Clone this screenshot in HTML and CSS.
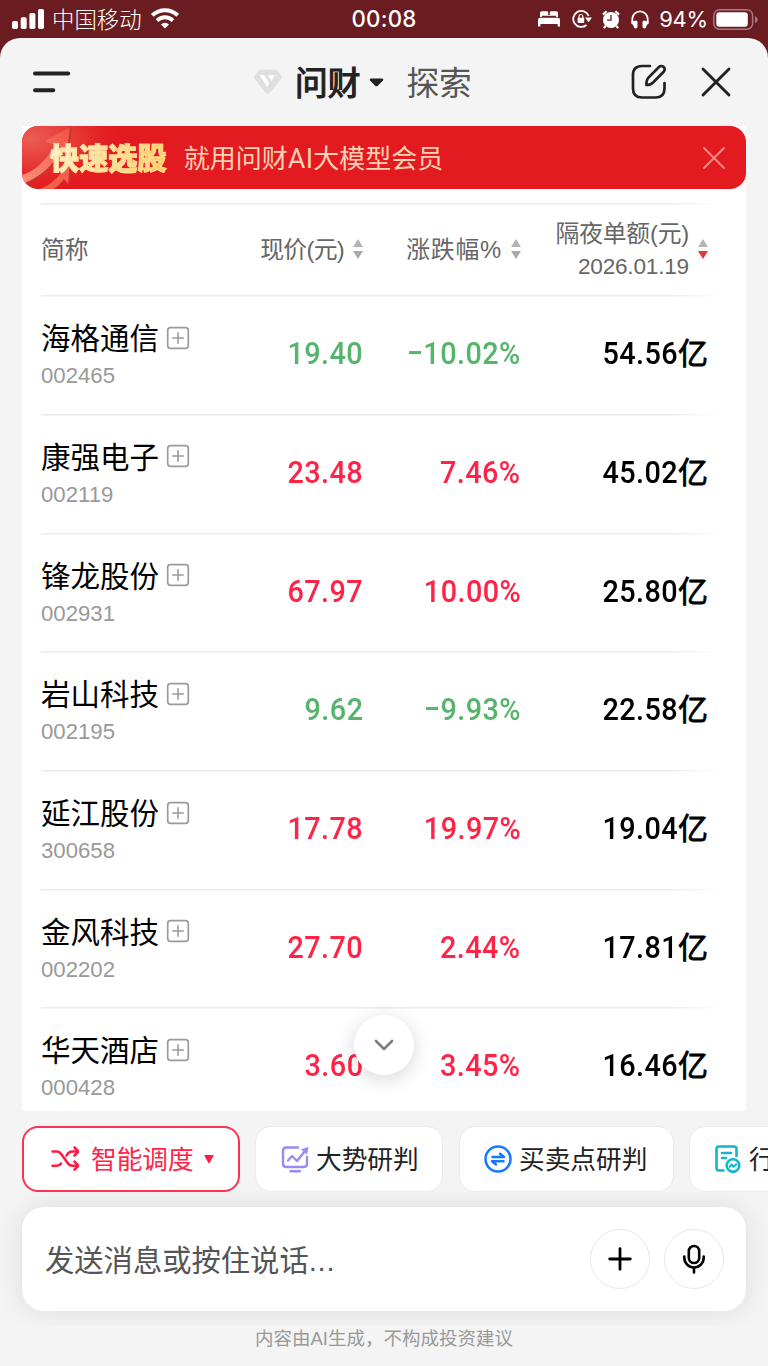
FILE: index.html
```html
<!DOCTYPE html>
<html lang="zh-CN">
<head>
<meta charset="utf-8">
<title>问财</title>
<link rel="stylesheet" href="styles.css">
</head>
<body>
<svg width="0" height="0" class="defs" aria-hidden="true">
  <symbol id="add" viewBox="0 0 24 24"><rect x="1.7" y="1.7" width="20.6" height="20.6" rx="2.8" fill="none" stroke="#9b9b9b" stroke-width="1.7"/><path d="M12 6.2v11.6M6.2 12h11.6" stroke="#9b9b9b" stroke-width="1.6"/></symbol>
  <symbol id="sort" viewBox="0 0 10 20"><path d="M5 0L10 8H0z" fill="#b3b3b3"/><path d="M0 12h10L5 20z" fill="currentColor"/></symbol>
</svg>
<div class="status">
  <div class="status-left">
    <svg width="32" height="20" viewBox="0 0 32 20" fill="#fff"><rect x="0" y="12" width="6" height="8" rx="1.7"/><rect x="8.7" y="8.3" width="6" height="11.7" rx="1.7"/><rect x="17.4" y="4" width="6" height="16" rx="1.7"/><rect x="26" y="0" width="6" height="20" rx="1.7"/></svg>
    <span class="carrier">中国移动</span>
    <svg class="wifi" width="28" height="21" viewBox="0 0 28 21" fill="none" stroke="#fff" stroke-width="3.9"><path d="M1.3 7.3a18.3 18.3 0 0 1 25.4 0"/><path d="M6 12.6a11.4 11.4 0 0 1 16 0"/><path d="M14 20.6l-4-4.2a5.8 5.8 0 0 1 8 0z" fill="#fff" stroke="none"/></svg>
  </div>
  <span class="time">00:08</span>
  <div class="status-right">
    <svg width="22" height="16" viewBox="0 0 22 16" fill="#fff"><path d="M2 6V2Q2 .3 3.7.3H9q1.2 0 1.2 1.2V4H11.800V1.500Q11.800.3 13 .3h5.300Q20 .3 20 2v4h-2V4.800H4V6z"/><path d="M2 6.800h18q2 0 2 2V15.500h-2.400V13H2.400v2.500H0V8.800q0-2 2-2z"/></svg>
    <svg class="lock" width="20" height="18" viewBox="0 0 20 18"><path d="M16.700 6A8 8 0 1 0 14.500 15" fill="none" stroke="#fff" stroke-width="1.800"/><path d="M13 7.500h7l-3.500 4.700z" fill="#fff"/><rect x="5.600" y="7.700" width="6.600" height="5.300" rx=".8" fill="#fff"/><path d="M7 8V6.400a1.900 1.900 0 0 1 3.800 0V8" fill="none" stroke="#fff" stroke-width="1.200"/></svg>
    <svg class="alarm" width="18" height="19" viewBox="0 0 18 19"><circle cx="9" cy="10" r="8" fill="#fff"/><path d="M.9 4.600L4.600 1.300M13.400 1.300l3.700 3.300M3.500 16l-1.600 2.200M14.500 16l1.600 2.200" stroke="#fff" stroke-width="2.200"/><path d="M9 5v5.200H5" fill="none" stroke="#6a1c20" stroke-width="1.300"/></svg>
    <svg class="phones" width="18" height="19" viewBox="0 0 18 19"><path d="M1.300 14V9a7.700 7.700 0 0 1 15.400 0v5" fill="none" stroke="#fff" stroke-width="1.800"/><rect x="2.800" y="10.500" width="3.700" height="8" rx="1.700" fill="#fff"/><rect x="11.500" y="10.500" width="3.700" height="8" rx="1.700" fill="#fff"/><path d="M.4 11h2.700v5.500Q.4 14 .4 11zM17.600 11h-2.700v5.500q2.700-2.500 2.700-5.500z" fill="#fff"/></svg>
    <span class="pct">94%</span>
    <svg class="battery" width="45" height="21" viewBox="0 0 45 21"><rect x=".8" y=".8" width="38.800" height="19.400" rx="5.600" fill="none" stroke="#a87a7c" stroke-width="1.500"/><rect x="3.300" y="3.300" width="31.500" height="14.400" rx="3" fill="#fff"/><path d="M42 7q2.700 1 2.700 3.500T42 14z" fill="#a87a7c"/></svg>
  </div>
</div>
<main class="sheet">
  <header class="top">
    <svg class="menu" width="38" height="24" viewBox="0 0 38 24" stroke="#222" stroke-width="4" stroke-linecap="round"><path d="M2 3.500h33.200M2 20.200h18.300"/></svg>
    <svg class="gem" width="30" height="26" viewBox="0 0 30 26"><path d="M7.500.8h15q1.500 0 2.400 1.200l3.500 4.700q1 1.500 0 3L17.600 23q-3 3.500-5.600 0L1.500 9.700q-1-1.500 0-3L5.100 2Q6 .8 7.500.8z" fill="#dfdfdf"/><path d="M6.500 6h4.500l5.300 8-2.200 4zM14.500 6h7.300l-3.200 6z" fill="#fff"/></svg>
    <span class="tab-on">问财</span>
    <svg class="caret" width="15" height="9" viewBox="0 0 15 9"><path d="M1.800.5h11.400q1.800.5.800 2L8.800 7.700q-1.300 1.200-2.600 0L1 2.500Q0 1 1.800.5z" fill="#222"/></svg>
    <span class="tab-off">探索</span>
    <svg class="edit" width="36" height="36" viewBox="0 0 36 36" fill="none" stroke="#222" stroke-width="2.700" stroke-linecap="round" stroke-linejoin="round"><path d="M19 2H11Q2 2 2 11v13.500q0 9 9 9h13.500q9 0 9-9V19"/><path d="M15.500 21q-.5-5 2.400-7.900L28 3a3.300 3.300 0 0 1 4.700 4.700L22.800 17.800q-2.800 3.200-7.300 3.200z"/></svg>
    <svg class="close" width="32" height="32" viewBox="0 0 32 32" stroke="#222" stroke-width="2.900" stroke-linecap="round"><path d="M3 3l26 26M29 3L3 29"/></svg>
  </header>
  <section class="panel">
    <div class="banner">
      <svg class="banner-art" width="110" height="63" viewBox="0 0 110 63">
        <defs><radialGradient id="glow" cx="8%" cy="20%" r="85%"><stop offset="0" stop-color="#ec5d55"/><stop offset=".5" stop-color="#e83f3b" stop-opacity=".8"/><stop offset="1" stop-color="#e31b20" stop-opacity="0"/></radialGradient><linearGradient id="arrow" x1="0" y1="1" x2="1" y2="0"><stop offset="0" stop-color="#ff9078"/><stop offset="1" stop-color="#ee5244"/></linearGradient></defs>
        <rect width="110" height="63" fill="url(#glow)"/>
        <path d="M3 59Q29 48 41 25l6-1 3-22-2-1z" fill="#c4352f"/>
        <path d="M0 49Q18 44 33 19l-10-4L48 1l-3 26-5-4Q27 48 0 58z" fill="url(#arrow)"/>
        <path d="M46 38l5-3-4 24-3-6z" fill="#c4352f"/><path d="M18 63q13-5 21-16l-5-2 14-11-2 24-4-5q-5 7-11 10z" fill="#f5604d"/>
      </svg>
      <strong class="banner-title">快速选股</strong>
      <span class="banner-text">就用问财<span class="latin">AI</span>大模型会员</span>
      <svg class="banner-close" width="24" height="24" viewBox="0 0 24 24" stroke="#f58b86" stroke-width="1.900" stroke-linecap="round"><path d="M2 2l20 20M22 2L2 22"/></svg>
    </div>
    <div class="table">
      <div class="row head">
        <span class="h-name">简称</span>
        <span class="h-cell h-price"><span>现价(元)</span><svg class="sort"><use href="#sort"/></svg></span>
        <span class="h-cell h-rate"><span>涨跌幅%</span><svg class="sort"><use href="#sort"/></svg></span>
        <span class="h-cell h-amt"><span class="two">隔夜单额(元)<br><span class="date">2026.01.19</span></span><svg class="sort active"><use href="#sort"/></svg></span>
      </div>
      <div class="row"><div class="stock"><div class="name">海格通信<svg class="add"><use href="#add"/></svg></div><div class="code">002465</div></div><span class="num down"><b>19.40</b></span><span class="num down"><b>−10.02%</b></span><span class="num"><b>54.56</b><i>亿</i></span></div>
      <div class="row"><div class="stock"><div class="name">康强电子<svg class="add"><use href="#add"/></svg></div><div class="code">002119</div></div><span class="num up"><b>23.48</b></span><span class="num up"><b>7.46%</b></span><span class="num"><b>45.02</b><i>亿</i></span></div>
      <div class="row"><div class="stock"><div class="name">锋龙股份<svg class="add"><use href="#add"/></svg></div><div class="code">002931</div></div><span class="num up"><b>67.97</b></span><span class="num up"><b>10.00%</b></span><span class="num"><b>25.80</b><i>亿</i></span></div>
      <div class="row"><div class="stock"><div class="name">岩山科技<svg class="add"><use href="#add"/></svg></div><div class="code">002195</div></div><span class="num down"><b>9.62</b></span><span class="num down"><b>−9.93%</b></span><span class="num"><b>22.58</b><i>亿</i></span></div>
      <div class="row"><div class="stock"><div class="name">延江股份<svg class="add"><use href="#add"/></svg></div><div class="code">300658</div></div><span class="num up"><b>17.78</b></span><span class="num up"><b>19.97%</b></span><span class="num"><b>19.04</b><i>亿</i></span></div>
      <div class="row"><div class="stock"><div class="name">金风科技<svg class="add"><use href="#add"/></svg></div><div class="code">002202</div></div><span class="num up"><b>27.70</b></span><span class="num up"><b>2.44%</b></span><span class="num"><b>17.81</b><i>亿</i></span></div>
      <div class="row"><div class="stock"><div class="name">华天酒店<svg class="add"><use href="#add"/></svg></div><div class="code">000428</div></div><span class="num up"><b>3.60</b></span><span class="num up"><b>3.45%</b></span><span class="num"><b>16.46</b><i>亿</i></span></div>
    </div>
    <div class="scroll-down"><svg width="20" height="12" viewBox="0 0 20 12" fill="none" stroke="#7d7f86" stroke-width="2.700" stroke-linecap="round" stroke-linejoin="round"><path d="M2 2l8 8 8-8"/></svg></div>
  </section>
  <nav class="chips">
    <div class="chip chip-on">
      <svg width="28" height="26" viewBox="0 0 28 26" fill="none" stroke="#ff1a44" stroke-width="2.500" stroke-linecap="round" stroke-linejoin="round"><path d="M1.500 5.500h4.500q2.500 0 4 2.200l6.500 9q2 3 5 3H27M1.500 19.700h4.500q2.500 0 4-2.200M15.500 9.500q2.300-4 5.500-4H27M23.500 1.500l4 4-4 4M23.500 15.700l4 4-4 4"/></svg>
      <span>智能调度</span>
      <svg class="chip-caret" width="10" height="9" viewBox="0 0 10 9"><path d="M.8.500h8.400L5 8z" fill="#ff1a44" stroke="#ff1a44" stroke-linejoin="round"/></svg>
    </div>
    <div class="chip chip-trend">
      <svg width="28" height="28" viewBox="0 0 28 28" fill="none" stroke="#968cf5" stroke-width="2.400" stroke-linecap="round" stroke-linejoin="round"><path d="M17 2.500H5.500Q2 2.500 2 6v12.500Q2 22 5.500 22h17q3.500 0 3.500-3.500V12M9.500 26.300h9.500M7 15.500l4-4.500 5 5L24 6"/><path d="M21 4.500l6-2-1.300 6z" fill="#968cf5" stroke-width="1"/></svg>
      <span>大势研判</span>
    </div>
    <div class="chip chip-trade">
      <svg width="28" height="28" viewBox="0 0 28 28" fill="none" stroke="#1677ff" stroke-width="2.500" stroke-linecap="round" stroke-linejoin="round"><circle cx="14" cy="14" r="12.500"/><path d="M8.500 12h11.500l-4-3.200M19.500 16.200H8l4 3.200"/></svg>
      <span>买卖点研判</span>
    </div>
    <div class="chip chip-cut">
      <svg width="26" height="28" viewBox="0 0 26 28" fill="none" stroke="#11b7c9" stroke-width="2.600" stroke-linecap="round" stroke-linejoin="round"><path d="M8.500 25.500H4q-2.500 0-2.500-2.500V4Q1.500 1.500 4 1.500h15q2.500 0 2.500 2.500v7M7 8h9M7 13h4"/><circle cx="18" cy="20.500" r="6.300"/><path d="M14.700 21.800l2.200-2.300 1.700 2.300 2.600-2.600" stroke-width="2"/></svg>
      <span>行</span>
    </div>
  </nav>
  <div class="dock">
    <div class="input">
      <span class="placeholder">发送消息或按住说话<span class="dots">...</span></span>
      <span class="round"><svg width="24" height="24" viewBox="0 0 24 24" stroke="#000" stroke-width="2.800" stroke-linecap="round"><path d="M12 1.700v20.600M1.700 12h20.600"/></svg></span>
      <span class="round"><svg width="24" height="30" viewBox="0 0 24 30" fill="none" stroke="#000" stroke-width="2.600" stroke-linecap="round"><rect x="6.800" y="2" width="10.400" height="17" rx="5.200"/><path d="M2.300 12.500v1.300a9.700 9.700 0 0 0 19.400 0v-1.300M12 23.800v4.700"/></svg></span>
    </div>
  </div>
  <footer class="note">内容由AI生成，不构成投资建议</footer>
</main>
</body>
</html>
```
FILE: styles.css
```css
* { box-sizing: border-box; }
body {
  margin: 0;
  width: 768px;
  height: 1366px;
  overflow: hidden;
  background: #6a1c20;
  font-family: "Liberation Sans", "Noto Sans CJK SC", sans-serif;
  color: #000;
  display: flex;
  flex-direction: column;
}
svg { display: block; flex: none; }
.defs { position: absolute; }

.status {
  flex: none;
  height: 38px;
  display: grid;
  grid-template-columns: 1fr 68px 1fr;
  align-items: center;
  color: #fff;
}
.status-left { display: flex; align-items: center; padding-left: 12px; }
.carrier { margin-left: 8px; padding-top: 3px; font-size: 22.4px; font-weight: 300; line-height: 35px; }
.wifi { margin-left: 9px; margin-top: -2px; }
.time { font: 500 22.3px/38px Inter, sans-serif; letter-spacing: 0.2px; text-align: center; white-space: nowrap; }
.status-right { display: flex; align-items: center; justify-content: flex-end; padding-right: 10px; }
.lock { margin-left: 12px; }
.alarm { margin-left: 10px; }
.phones { margin-left: 11px; }
.pct { margin-left: 10px; font: 400 22px/38px Inter, sans-serif; letter-spacing: -0.2px; }
.battery { margin-left: 5px; }
.status-right > svg:first-child { margin-left: 0; }

.sheet {
  flex: 1;
  min-height: 0;
  background: #f4f4f4;
  border-radius: 20px 20px 0 0;
  display: flex;
  flex-direction: column;
  overflow: hidden;
}
.top { flex: none; height: 88px; display: flex; align-items: center; padding: 0 36px 0 33px; }
.gem { margin-left: 182px; }
.tab-on { margin-left: 12px; padding-top: 3px; font-size: 32.7px; line-height: 45px; color: #222; -webkit-text-stroke: 1.2px #222; }
.caret { margin-left: 9px; }
.tab-off { margin-left: 22px; padding-top: 3px; font-size: 32.7px; line-height: 45px; color: #555; }
.edit { margin-left: auto; }
.close { margin-left: 33px; }

.panel { position: relative; flex: none; height: 985px; margin: 0 22px; background: #fff; }
.banner {
  position: relative;
  height: 63px;
  border-radius: 16px;
  overflow: hidden;
  background: #e31b20;
  display: flex;
  align-items: center;
  padding: 0 20px 0 28px;
}
.banner-art { position: absolute; left: 0; top: 0; }
.banner-title {
  position: relative;
  margin-top: 3px;
  font-size: 29.2px;
  line-height: 44px;
  font-weight: 900;
  background: linear-gradient(100deg, #fff1cb, #ffce62);
  background-clip: text;
  -webkit-background-clip: text;
  color: transparent;
  -webkit-text-stroke: 0.8px #ffe09a;
}
.banner-text { margin-left: 17px; margin-top: 2px; font-size: 26px; line-height: 40px; color: #ffd1b5; white-space: nowrap; }
.latin { font-family: Roboto, sans-serif; font-size: 27px; letter-spacing: 0.3px; }
.banner-close { margin-left: auto; }

.table { height: 922px; overflow: hidden; padding: 14px 24px 0 19px; }
.row {
  height: 118.7px;
  display: grid;
  grid-template-columns: 180px 142px 158px 187px;
  background: linear-gradient(90deg, #ebebeb 92%, #fff) top / 100% 1.5px no-repeat;
}
.head { height: 92.3px; align-items: center; font-size: 23.8px; line-height: 32px; color: #666; }
.h-name, .h-price > span, .h-rate > span { position: relative; top: 1px; }
.h-cell { display: flex; justify-content: flex-end; align-items: center; white-space: nowrap; text-align: right; }
.h-price > span { letter-spacing: -0.7px; }
.h-rate > span { letter-spacing: 0.8px; }
.two { letter-spacing: -0.2px; padding-top: 2px; line-height: 31.5px; }
.sort { width: 10px; height: 20px; margin-left: 9px; color: #aaa; }
.active { color: #ed343a; }
.date { font-size: 22.6px; }
.stock { padding-top: 24px; }
.name { display: flex; align-items: center; font-size: 29.5px; line-height: 40px; white-space: nowrap; }
.add { width: 24px; height: 24px; margin-left: 7px; margin-top: -3px; }
.code { margin-top: 6px; font-size: 22.2px; line-height: 22px; color: #999; }
.num {
  padding-top: 38px;
  font: 500 32px/40px Roboto, "Noto Sans CJK SC", sans-serif;
  text-align: right;
  white-space: nowrap;
}
.num b {
  display: inline-block;
  font-weight: 500;
  letter-spacing: 0.5px;
  transform: scaleX(0.9);
  transform-origin: right center;
}
.num i { font: 400 30px/1 "Noto Sans CJK SC", sans-serif; line-height: 0; -webkit-text-stroke: 0.8px #000; }
.up { color: #ff2447; }
.down { color: #56b56c; }
.scroll-down {
  position: absolute;
  left: 332px;
  top: 889px;
  width: 60px;
  height: 60px;
  border-radius: 50%;
  background: #fff;
  box-shadow: 0 4px 20px rgba(0, 0, 0, 0.16);
  display: grid;
  place-items: center;
}

.chips { flex: none; height: 81px; padding: 15px 0 0 22px; display: flex; gap: 15px; overflow: hidden; }
.chip {
  flex: none;
  height: 66px;
  border: 1.5px solid #ebebeb;
  border-radius: 16px;
  background: #fff;
  display: flex;
  align-items: center;
  font-size: 25.7px;
  line-height: 38px;
  color: #222;
  white-space: nowrap;
}
.chip span { padding-top: 2px; }
.chip-on { width: 218px; padding-left: 27px; border: 2px solid #ff3052; color: #ff2447; }
.chip-on span { margin-left: 12px; }
.chip-caret { margin-left: 10px; }
.chip-trend { width: 188px; padding-left: 25px; }
.chip-trend span { margin-left: 7px; }
.chip-trade { width: 215px; margin-left: 1px; padding-left: 24px; }
.chip-trade span { margin-left: 7px; }
.chip-cut { width: 189px; padding-left: 25px; }
.chip-cut span { margin-left: 8px; }

.dock { flex: none; height: 134px; padding: 15px 22px; overflow: hidden; }
.input {
  height: 104px;
  border-radius: 22px;
  background: #fff;
  box-shadow: 0 0 28px rgba(0, 0, 0, 0.1);
  display: flex;
  align-items: center;
  padding: 0 22px 0 23px;
}
.placeholder { margin-right: auto; padding-top: 4px; font-size: 29.3px; line-height: 44px; color: #555; }
.dots { letter-spacing: 0.8px; }
.round { width: 60px; height: 60px; border: 1.5px solid #e8e8e8; border-radius: 50%; display: grid; place-items: center; margin-left: 14px; }
.note { text-align: center; font-size: 18.5px; line-height: 25px; color: #999; }
```
